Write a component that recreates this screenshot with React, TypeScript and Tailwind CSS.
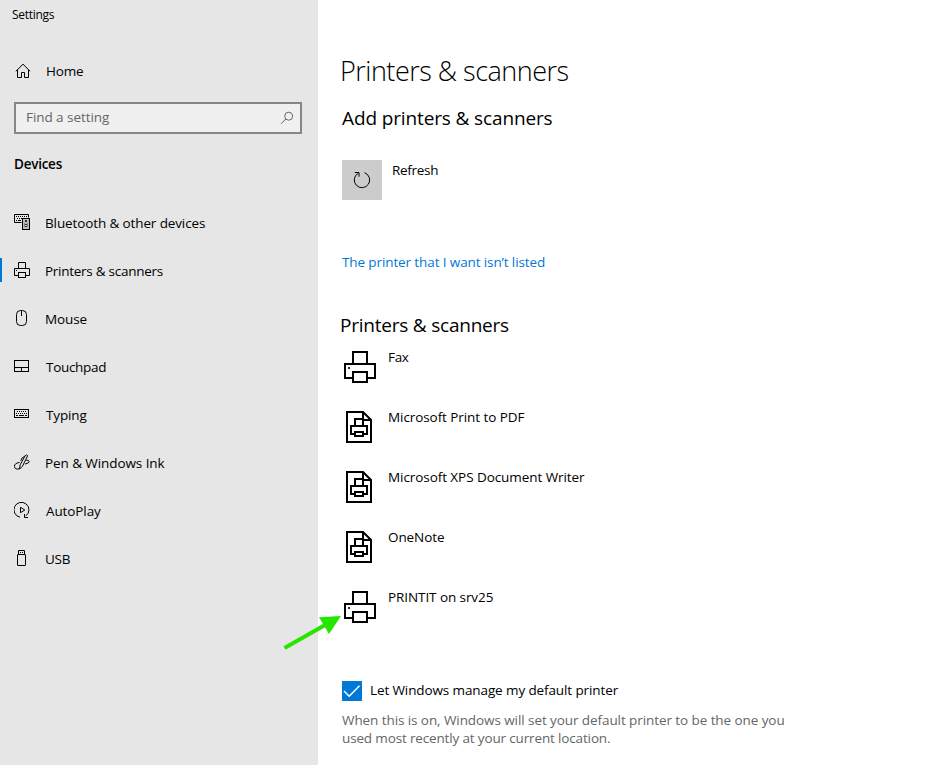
import type { ReactNode } from 'react';

function Icon({ children }: { children: ReactNode }) {
  return (
    <svg width="16" height="16" viewBox="0 0 16 16" fill="none" stroke="#000" strokeWidth="1" className="block shrink-0">
      {children}
    </svg>
  );
}

const BluetoothIcon = () => (
  <Icon>
    <path d="M7.5 8.5H.5v-8h14v3" />
    <path d="M2 2.5h11M3 4.5h5" strokeDasharray="1 1" />
    <path d="M2 6.5h1M4 6.5h3" />
    <rect x="8.5" y="4.5" width="7" height="11" fill="#bbb" />
    <path d="M11 6.5h2M11 7.500h2M11 10.500h2M11 12.500h2" stroke="#333" />
    <path d="M10.500 9v4M13.500 9v4" stroke="#888" />
  </Icon>
);

const PrinterIcon = () => (
  <Icon>
    <path d="M4.500 6V.5h7V6M4.500 13.500h-4v-7h15v7h-4" />
    <rect x="4.500" y="10.500" width="7" height="5" />
    <path d="M2 8.500h1" />
  </Icon>
);

const MouseIcon = () => (
  <Icon>
    <rect x="2.500" y=".5" width="10" height="15" rx="4" />
    <path d="M7.500 1v5" />
  </Icon>
);

const TouchpadIcon = () => (
  <Icon>
    <rect x=".5" y="2.500" width="14" height="11" />
    <path d="M1 9.500h13M7.500 9.500v4" />
  </Icon>
);

const KeyboardIcon = () => (
  <Icon>
    <rect x=".5" y="3.500" width="14" height="8" />
    <path d="M3 5.500h10M2 7.500h11" strokeDasharray="1 1" />
    <path d="M2 9.500h2M5 9.500h5M11 9.500h2" />
  </Icon>
);

const PenIcon = () => (
  <Icon>
    <path d="M5.500 15.200 6.200 10.800 11.200 1.600Q12.500.2 13.700 1.700L8.500 12.200 5.500 15.200M10.700 2.200 7.800 4.200 6.800 6.800" />
    <path d="M5.600 8.500Q.5 9 .5 12.300C.5 15 2.500 15.500 5 14.800M12.300 6.300h2q1.700 1.500 0 2.600l-3.300 1.200" />
  </Icon>
);

const AutoPlayIcon = () => (
  <Icon>
    <path d="M6 15.200A7.500 7.500 0 1 1 12 13.800M10.500 12v3.500H14" />
    <path d="M6.500 5.300v5.400L10.800 8Z" />
  </Icon>
);

const UsbIcon = () => (
  <Icon>
    <path d="M4.500 4V.5h6V4" />
    <rect x="3.500" y="4.500" width="8" height="11" rx=".5" />
    <path d="M6 2.500h1M8 2.500h1" />
  </Icon>
);

const LargePrinter = () => (
  <svg width="32" height="32" viewBox="0 0 32 32" fill="none" stroke="#000" strokeWidth="2" className="block">
    <path d="M9 13V1h14v12M8 27H1V13h30v14h-7" />
    <rect x="9" y="21" width="14" height="10" />
    <path d="M4 17h2" strokeWidth="2" stroke="#333" />
  </svg>
);

const DocumentPrinter = () => (
  <svg width="32" height="32" viewBox="0 0 32 32" fill="none" stroke="#000" strokeWidth="2" className="block">
    <path d="M3 1h16l8 8v22H3ZM19 1v8h8" />
    <path d="M11 15V8h8v7M10 23H7v-8h16v8h-3" />
    <rect x="11" y="21" width="8" height="4" />
  </svg>
);

const navItems = [
  { label: 'Bluetooth & other devices', icon: BluetoothIcon, text: 'tracking-[-0.12px]' },
  { label: 'Printers & scanners', icon: PrinterIcon, text: 'tracking-[-0.27px]', active: true },
  { label: 'Mouse', icon: MouseIcon, text: 'tracking-[-0.1px]' },
  { label: 'Touchpad', icon: TouchpadIcon, text: 'pl-px tracking-[-0.3px]' },
  { label: 'Typing', icon: KeyboardIcon, text: 'pl-px tracking-[-0.15px]' },
  { label: 'Pen & Windows Ink', icon: PenIcon, text: 'tracking-[-0.08px]' },
  { label: 'AutoPlay', icon: AutoPlayIcon, text: 'pl-px tracking-[-0.1px]' },
  { label: 'USB', icon: UsbIcon, text: 'tracking-[-0.3px]' },
];

const printers = [
  { label: 'Fax', icon: LargePrinter, text: 'tracking-[-0.3px]' },
  { label: 'Microsoft Print to PDF', icon: DocumentPrinter, text: 'tracking-[-0.08px]' },
  { label: 'Microsoft XPS Document Writer', icon: DocumentPrinter, text: 'tracking-[-0.07px]' },
  { label: 'OneNote', icon: DocumentPrinter, text: 'tracking-[-0.08px]' },
  { label: 'PRINTIT on srv25', icon: LargePrinter, text: 'tracking-[-0.08px]' },
];

function Sidebar() {
  return (
    <aside className="w-[318px] shrink-0 bg-[#e6e6e6]">
      <div className="h-[30px] pl-3 text-[12px] leading-[30px] tracking-[-0.28px]">Settings</div>
      <div className="mt-[25px] flex h-8 items-center pl-[15px]">
        <Icon>
          <path d="M.8 8.300 8 1.200l7.200 7.100M2.500 7v7.500h4v-5h3v5h4V7" />
        </Icon>
        <span className="pl-[15px] tracking-[-0.2px]">Home</span>
      </div>
      <div className="mt-[15px] ml-[14px] flex h-8 w-[288px] items-center justify-between border-2 border-[#868686] bg-[#f0f0f0] pr-[6px] pl-[10px] text-[#666]">
        <span className="-mt-[2px] tracking-[-0.06px]">Find a setting</span>
        <svg width="14" height="14" viewBox="0 0 14 14" fill="none" stroke="#666" className="block">
          <circle cx="8.700" cy="5.200" r="4" />
          <path d="M5.800 8 1 12.800" />
        </svg>
      </div>
      <h2 className="mt-5 pl-[14px] text-[13.500px] leading-5 font-semibold tracking-[-0.25px]">Devices</h2>
      <nav className="mt-[25px]">
        {navItems.map(({ label, icon: NavIcon, text, active }) => (
          <div key={label} className="flex h-12 items-center">
            <span className={active ? '-mt-[2px] h-6 w-[2px] bg-[#0078d7]' : 'w-[2px]'} />
            <span className="-mt-[2px] ml-3">
              <NavIcon />
            </span>
            <span className={`ml-[15px] ${text}`}>{label}</span>
          </div>
        ))}
      </nav>
    </aside>
  );
}

export default function App() {
  return (
    <div className="relative flex h-[765px] w-[940px] overflow-hidden bg-white font-['Open_Sans','Noto_Sans',sans-serif] text-[13.500px] leading-[18px] whitespace-nowrap text-black">
      <Sidebar />
      <main className="flex-1 pl-6">
        <h1 className="-ml-[2px] mt-[50px] text-[27px] leading-[41px] font-[350] tracking-[-0.5px]">Printers &amp; scanners</h1>
        <h2 className="mt-[13px] text-[19px] leading-7 tracking-[-0.13px]">Add printers &amp; scanners</h2>
        <div className="mt-7 flex h-10 gap-[10px]">
          <div className="flex w-10 items-center justify-center bg-[#ccc]">
            <svg width="18" height="18" viewBox="0 0 18 18" fill="none" stroke="#000" className="block">
              <path d="M11.500 1.700A7.700 7.700 0 1 1 5.300 2.200M1.800 1.500H6v4.200" />
            </svg>
          </div>
          <span className="pt-px tracking-[-0.3px]">Refresh</span>
        </div>
        <a className="mt-[53px] block tracking-[-0.11px] text-[#0078d7]">The printer that I want isn’t listed</a>
        <h2 className="-ml-[2px] mt-10 text-[19px] leading-7 tracking-[-0.22px]">Printers &amp; scanners</h2>
        <ul className="mt-3">
          {printers.map(({ label, icon: DeviceIcon, text }) => (
            <li key={label} className="flex h-[60px] pl-[2px]">
              <DeviceIcon />
              <span className={`-mt-[3px] ml-3 ${text}`}>{label}</span>
            </li>
          ))}
        </ul>
        <div className="mt-[30px] flex h-5 items-center gap-2">
          <span className="flex size-5 items-center justify-center bg-[#0078d7]">
            <svg width="20" height="20" viewBox="0 0 20 20" fill="none" stroke="#fff" strokeWidth="1.500">
              <path d="m2 10 5.200 5.200L17.500 4.800" />
            </svg>
          </span>
          <span className="-mt-[2px] tracking-[-0.11px]">Let Windows manage my default printer</span>
        </div>
        <p className="mt-[10px] tracking-[-0.08px] text-[#666]">
          When this is on, Windows will set your default printer to be the one you
          <br />
          <span className="tracking-[-0.15px]">used most recently at your current location.</span>
        </p>
      </main>
      <svg className="absolute top-[612px] left-[280px]" width="64" height="40" viewBox="0 0 64 40">
        <path d="M4.500 36 46 12.500" stroke="#26e600" strokeWidth="4" />
        <path d="M39 5.200 61 4 49 22Z" fill="#26e600" />
      </svg>
    </div>
  );
}
